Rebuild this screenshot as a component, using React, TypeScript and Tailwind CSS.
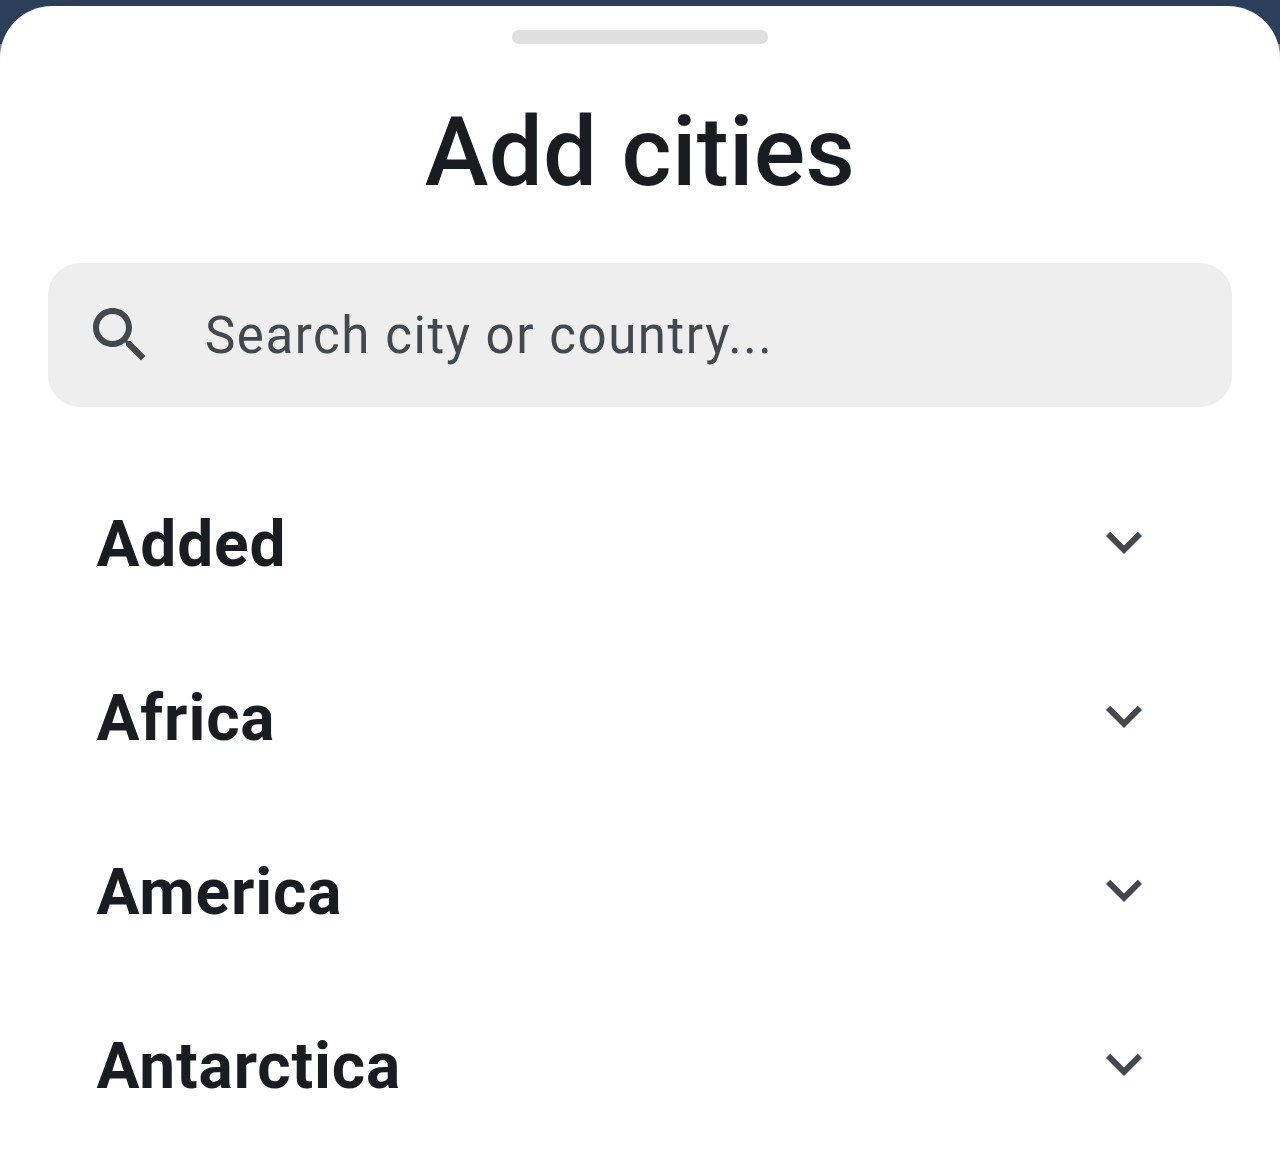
const regions = ["Added", "Africa", "America", "Antarctica"];

function ChevronDown() {
  return (
    <svg viewBox="0 0 24 24" className="w-[72px] h-[72px] fill-[#43474e]">
      <path d="M16.59 8.59L12 13.17 7.41 8.59 6 10l6 6 6-6z" />
    </svg>
  );
}

function SearchIcon() {
  return (
    <svg viewBox="0 0 24 24" className="w-[72px] h-[72px] shrink-0 fill-[#43474e]">
      <path d="M15.5 14h-.79l-.28-.27C15.41 12.59 16 11.11 16 9.5 16 5.91 13.09 3 9.5 3S3 5.91 3 9.5 5.91 16 9.5 16c1.61 0 3.09-.59 4.23-1.57l.27.28v.79l5 4.99L20.49 19l-4.99-5zm-6 0C7.01 14 5 11.99 5 9.5S7.01 5 9.5 5 14 7.01 14 9.5 11.99 14 9.5 14z" />
    </svg>
  );
}

export default function App() {
  return (
    <div className="relative w-[1280px] h-[1150px] overflow-hidden bg-[#808080] font-['Roboto',sans-serif]">
      {/* Status bar behind the sheet */}
      <div className="absolute inset-x-0 top-0 h-[44px] bg-[#2c3e5a]" />

      <div className="relative mt-[6px] h-[1144px] bg-white rounded-t-[52px] overflow-hidden">
        <div className="flex justify-center pt-[24px]">
          <div className="w-[256px] h-[14px] rounded-full bg-[#dfdfdf]" />
        </div>

        <h1 className="mt-[52px] text-center text-[96px] leading-[112px] tracking-[0.3px] font-medium text-[#191c20]">
          Add cities
        </h1>

        <div className="mx-[48px] mt-[55px] h-[144px] rounded-[32px] bg-[#eeeeee] flex items-center pl-[36px]">
          <SearchIcon />
          <span className="ml-[49px] pt-[2px] text-[51px] leading-[60px] tracking-[1.56px] text-[#43474e]">
            Search city or country...
          </span>
        </div>

        <div className="mt-[48px]">
          {regions.map((r) => (
            <div key={r} className="h-[174px] flex items-center justify-between pl-[96.5px] pr-[120px]">
              <span className="relative top-[3px] text-[64px] leading-[76px] tracking-[0.85px] font-bold text-[#191c20]">
                {r}
              </span>
              <ChevronDown />
            </div>
          ))}
        </div>
      </div>
    </div>
  );
}
